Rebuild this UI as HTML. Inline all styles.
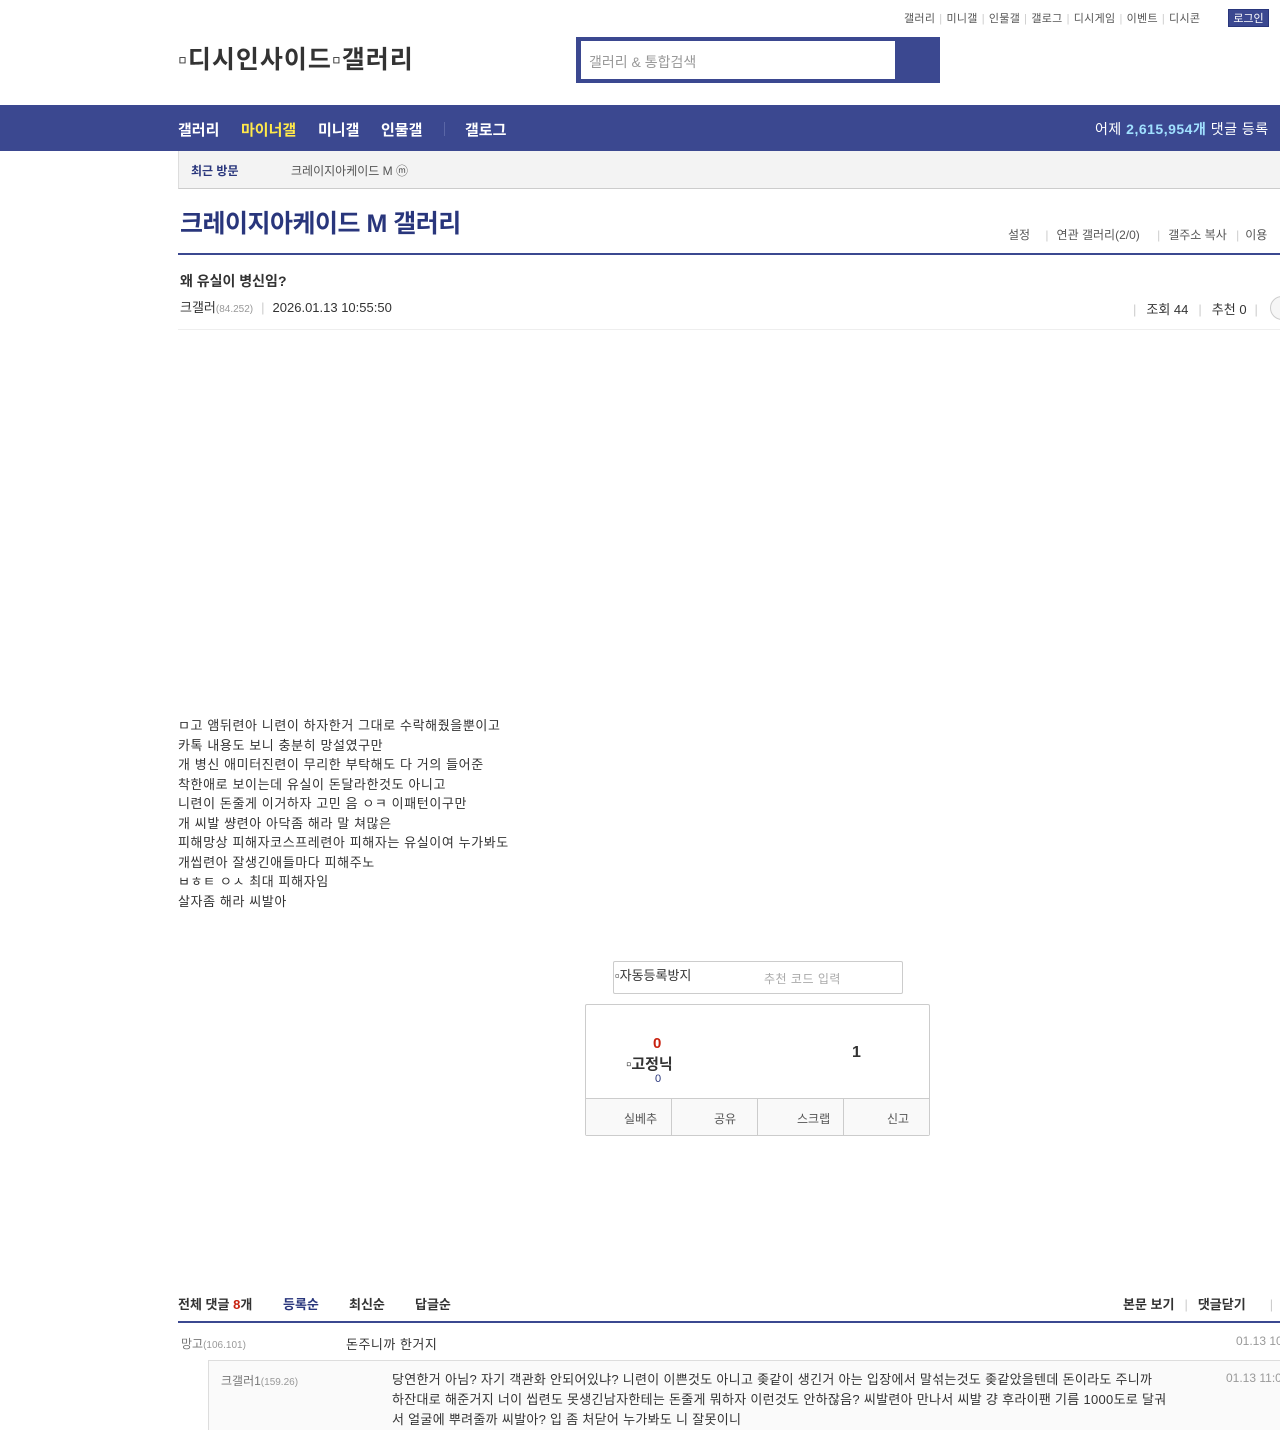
<!DOCTYPE html>
<html><head><meta charset="utf-8"><style>
*{margin:0;padding:0;box-sizing:border-box}
body{width:1280px;height:1428px;overflow:hidden;background:#fff;font-family:"Liberation Sans","Noto Sans CJK KR",sans-serif;color:#333;position:relative}
.a{position:absolute;white-space:nowrap}
.top{top:10px;left:904px;font-size:11px;color:#555;letter-spacing:0.3px}
.top span{color:#ccc;margin:0 4px}
.login{top:9px;left:1228px;width:41px;height:18px;background:#3b4890;color:#fff;font-size:11px;text-align:center;line-height:18px;border:1px solid #29367c}
.logo{left:178px;top:40px;font-size:25px;font-weight:bold;color:#333;letter-spacing:1px}
.search{left:576px;top:37px;width:364px;height:46px;background:#3b4890}
.search div{position:absolute;left:5px;top:4px;width:314px;height:38px;background:#fff;font-size:14px;color:#999;padding:11px 8px}
.nav{left:0;top:105px;width:1280px;height:46px;background:#3b4890}
.nav .a{top:14px;font-size:15px;font-weight:bold;color:#fff}
.sub{left:178px;top:151px;width:1102px;height:38px;background:#f3f3f3;border-left:1px solid #ddd;border-bottom:1px solid #ccc}
.tit{left:180px;top:204px;font-size:25px;font-weight:bold;color:#29367c;letter-spacing:-0.5px}
.hr1{left:178px;top:253px;width:1102px;height:2px;background:#3b4890}
.body{left:178px;top:716px;font-size:13px;line-height:19.5px;color:#333;white-space:pre;letter-spacing:0.6px}
.box{border:1px solid #ccc;border-radius:2px}
</style></head><body>
<div class="a top">갤러리<span>|</span>미니갤<span>|</span>인물갤<span>|</span>갤로그<span>|</span>디시게임<span>|</span>이벤트<span>|</span>디시콘</div>
<div class="a login">로그인</div>
<div class="a logo">▫디시인사이드▫갤러리</div>
<div class="a search"><div>갤러리 &amp; 통합검색</div></div>
<div class="a nav">
<div class="a" style="left:178px">갤러리</div>
<div class="a" style="left:241px;color:#ffe94a">마이너갤</div>
<div class="a" style="left:318px">미니갤</div>
<div class="a" style="left:381px">인물갤</div>
<div class="a" style="left:444px;top:17px;width:1px;height:14px;background:#5a66a6"></div>
<div class="a" style="left:465px">갤로그</div>
<div class="a" style="left:1095px;font-weight:normal;font-size:14px;letter-spacing:0.5px">어제 <b style="color:#a0e0ff">2,615,954개</b> 댓글 등록</div>
</div>
<div class="a sub">
<div class="a" style="left:12px;top:11px;font-size:12px;font-weight:bold;color:#29367c">최근 방문</div>
<div class="a" style="left:112px;top:11px;font-size:12px;color:#555">크레이지아케이드 M ⓜ</div>
</div>
<div class="a tit">크레이지아케이드 M 갤러리</div>
<div class="a" style="left:1008px;top:226px;font-size:12px;color:#555">설정 <span style="color:#ccc;margin:0 8px 0 12px">|</span>연관 갤러리(2/0) <span style="color:#ccc;margin:0 8px 0 14px">|</span>갤주소 복사 <span style="color:#ccc;margin:0 6px">|</span>이용</div>
<div class="a hr1"></div>
<div class="a" style="left:180px;top:271px;font-size:14px;font-weight:bold;color:#333">왜 유실이 병신임?</div>
<div class="a" style="left:180px;top:297px;font-size:13px;color:#333">크갤러<span style="font-size:10px;color:#999">(84.252)</span><span style="color:#ccc;margin:0 8px">|</span>2026.01.13 10:55:50</div>
<div class="a" style="left:1133px;top:299px;font-size:13px;color:#333"><span style="color:#ccc;margin-right:10px">|</span>조회 44<span style="color:#ccc;margin:0 10px">|</span>추천 0<span style="color:#ccc;margin:0 8px">|</span></div>
<div class="a" style="left:1270px;top:296px;width:24px;height:24px;border:1px solid #ccc;border-radius:12px;background:#f6f6f6"></div>
<div class="a" style="left:178px;top:329px;width:1102px;height:1px;background:#eee"></div>
<div class="a body">ㅁ고 앰뒤련아 니련이 하자한거 그대로 수락해줬을뿐이고
카톡 내용도 보니 충분히 망설였구만
개 병신 애미터진련이 무리한 부탁해도 다 거의 들어준
착한애로 보이는데 유실이 돈달라한것도 아니고
니련이 돈줄게 이거하자 고민 음 ㅇㅋ 이패턴이구만
개 씨발 썅련아 아닥좀 해라 말 쳐많은
피해망상 피해자코스프레련아 피해자는 유실이여 누가봐도
개씹련아 잘생긴애들마다 피해주노
ㅂㅎㅌ ㅇㅅ 최대 피해자임
살자좀 해라 씨발아</div>
<div class="a box" style="left:613px;top:961px;width:290px;height:33px">
<div class="a" style="left:1px;top:3px;font-size:13px;color:#333">▫자동등록방지</div>
<div class="a" style="left:150px;top:8px;font-size:12px;color:#aaa;letter-spacing:0.5px">추천 코드 입력</div>
</div>
<div class="a box" style="left:585px;top:1004px;width:345px;height:132px">
<div class="a" style="left:67px;top:30px;font-size:15px;font-weight:bold;color:#c8210f">0</div>
<div class="a" style="left:40px;top:48px;font-size:15px;font-weight:bold;color:#333">▫고정닉</div>
<div class="a" style="left:69px;top:68px;font-size:11px;color:#29367c">0</div>
<div class="a" style="left:266px;top:39px;font-size:16px;font-weight:bold;color:#333">1</div>
<div class="a" style="left:0;top:93px;width:343px;height:37px;border-top:1px solid #ccc;background:#f9f9f9;font-size:12px;color:#555">
<div class="a" style="left:38px;top:11px">실베추</div>
<div class="a" style="left:85px;top:0;width:1px;height:37px;background:#ccc"></div>
<div class="a" style="left:128px;top:11px">공유</div>
<div class="a" style="left:171px;top:0;width:1px;height:37px;background:#ccc"></div>
<div class="a" style="left:211px;top:11px">스크랩</div>
<div class="a" style="left:257px;top:0;width:1px;height:37px;background:#ccc"></div>
<div class="a" style="left:301px;top:11px">신고</div>
</div>
</div>
<div class="a" style="left:178px;top:1294px;font-size:13px;font-weight:bold;color:#333">전체 댓글 <span style="color:#c8210f">8</span>개</div>
<div class="a" style="left:283px;top:1294px;font-size:13px;font-weight:bold;color:#29367c">등록순</div>
<div class="a" style="left:349px;top:1294px;font-size:13px;font-weight:bold;color:#333">최신순</div>
<div class="a" style="left:415px;top:1294px;font-size:13px;font-weight:bold;color:#333">답글순</div>
<div class="a" style="left:1123px;top:1294px;font-size:13px;font-weight:bold;color:#333">본문 보기<span style="color:#ccc;margin:0 10px;font-weight:normal">|</span>댓글닫기<span style="color:#ccc;margin-left:24px;font-weight:normal">|</span></div>
<div class="a" style="left:178px;top:1321px;width:1102px;height:2px;background:#3b4890"></div>
<div class="a" style="left:181px;top:1335px;font-size:12px;color:#777">망고<span style="font-size:10px;color:#999">(106.101)</span></div>
<div class="a" style="left:346px;top:1334px;font-size:13px;color:#333;letter-spacing:0.5px">돈주니까 한거지</div>
<div class="a" style="left:1236px;top:1334px;font-size:12px;color:#999">01.13 10</div>
<div class="a" style="left:208px;top:1360px;width:1072px;height:70px;background:#fafafa;border-top:1px solid #ddd;border-left:1px solid #ddd"></div>
<div class="a" style="left:221px;top:1372px;font-size:12px;color:#777">크갤러1<span style="font-size:10px;color:#999">(159.26)</span></div>
<div class="a" style="left:392px;top:1370px;width:775px;font-size:13px;line-height:20px;color:#333;white-space:normal;letter-spacing:0.3px;word-break:break-all">당연한거 아님? 자기 객관화 안되어있냐? 니련이 이쁜것도 아니고 좆같이 생긴거 아는 입장에서 말섞는것도 좆같았을텐데 돈이라도 주니까 하잔대로 해준거지 너이 씹련도 못생긴남자한테는 돈줄게 뭐하자 이런것도 안하잖음? 씨발련아 만나서 씨발 걍 후라이팬 기름 1000도로 달궈서 얼굴에 뿌려줄까 씨발아? 입 좀 처닫어 누가봐도 니 잘못이니</div>
<div class="a" style="left:1226px;top:1371px;font-size:12px;color:#999">01.13 11:0</div>
</body></html>
